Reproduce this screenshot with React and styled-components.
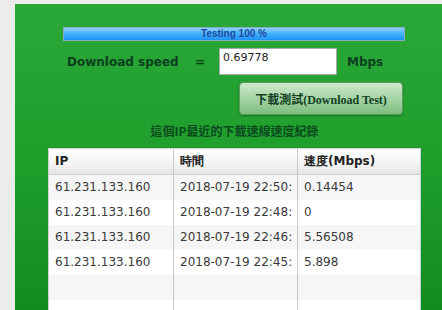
import styled, { createGlobalStyle } from 'styled-components';

const GlobalStyle = createGlobalStyle`
    html, body {
        margin: 0;
        padding: 0;
        background: #ececec;
        font-family: "DejaVu Sans", Verdana, sans-serif;
    }
`;

const Page = styled.div`
    height: 310px;
    padding: 4px 0 0 15px;
    box-sizing: border-box;
    display: flex;
    overflow: hidden;
`;

const Panel = styled.div`
    flex: 1;
    background: linear-gradient(to bottom, #2aa838 0%, #1f9e2c 50%, #118c1d 100%);
    padding: 23px 0 0 33px;
`;

const Column = styled.div`
    width: 373px;
    display: flex;
    flex-direction: column;
`;

const Progress = styled.div`
    margin-left: 15px;
    width: 340px;
    height: 12px;
    border: 1px solid #86a9c4;
    background: linear-gradient(to bottom, #8ed2ff 0%, #45b2ff 45%, #1c93f5 100%);
    color: #1d4a9e;
    font-family: "Liberation Sans", Arial, sans-serif;
    font-weight: bold;
    font-size: 10px;
    line-height: 12px;
    text-align: center;
`;

const SpeedRow = styled.div`
    display: flex;
    align-items: center;
    margin-top: 7px;
    height: 27px;
    color: #0c3f20;
    font-weight: bold;
    font-size: 12px;
`;

const Label = styled.span`
    margin-left: ${p => p.indent || 0}px;
    width: ${p => p.width}px;
`;

const SpeedInput = styled.div`
    width: 113px;
    height: 25px;
    background: #fff;
    border: 1px solid #a9a9a9;
    color: #222;
    font-weight: normal;
    font-size: 11px;
    line-height: 18px;
    padding-left: 3px;
    margin-right: 10px;
`;

const TestButton = styled.button`
    margin: 7px 0 0 191px;
    width: 164px;
    height: 33px;
    border: 1px solid #5e9a62;
    border-radius: 4px;
    background: linear-gradient(to bottom, #cfe9cf 0%, #a9d6a9 45%, #7fbd80 100%);
    box-shadow: 0 1px 2px rgba(0, 0, 0, 0.3);
    color: #12401f;
    font-family: "Liberation Serif", "Noto Sans CJK TC", serif;
    font-weight: bold;
    font-size: 12px;
    padding: 0;
`;

const Caption = styled.div`
    margin-top: 8px;
    text-align: center;
    color: #0b4a1d;
    font-family: "Noto Sans CJK TC", sans-serif;
    font-weight: bold;
    font-size: 12px;
    line-height: 16px;
`;

const Table = styled.div`
    margin-top: 9px;
    background: #fff;
    border: 1px solid #d0d0d0;
`;

const Row = styled.div`
    display: grid;
    grid-template-columns: 124px 124px 1fr;
    height: 25px;
    background: ${p => p.header
        ? 'linear-gradient(to bottom, #ffffff 0%, #f4f4f4 60%, #e4e4e4 100%)'
        : p.shaded ? '#f6f6f6' : '#ffffff'};
    border-bottom: ${p => p.header ? '1px solid #cfcfcf' : 'none'};
`;

const Cell = styled.div`
    border-left: ${p => p.first ? 'none' : '1px solid #c8c8c8'};
    padding-left: 6px;
    font-size: 12px;
    line-height: 25px;
    color: ${p => p.header ? '#222' : '#3a3a3a'};
    font-weight: ${p => p.header ? 'bold' : 'normal'};
    white-space: nowrap;
    overflow: hidden;
`;

const records = [
    ['61.231.133.160', '2018-07-19 22:50:', '0.14454'],
    ['61.231.133.160', '2018-07-19 22:48:', '0'],
    ['61.231.133.160', '2018-07-19 22:46:', '5.56508'],
    ['61.231.133.160', '2018-07-19 22:45:', '5.898'],
    ['', '', ''],
    ['', '', ''],
];

export default () => {
    return (
        <>
            <GlobalStyle />
            <Page>
                <Panel>
                    <Column>
                        <Progress>Testing 100 %</Progress>
                        <SpeedRow>
                            <Label indent={19} width={128}>Download speed</Label>
                            <Label width={24}>=</Label>
                            <SpeedInput>0.69778</SpeedInput>
                            <span>Mbps</span>
                        </SpeedRow>
                        <TestButton>下載測試(Download Test)</TestButton>
                        <Caption>這個IP最近的下載速線速度紀錄</Caption>
                        <Table>
                            <Row header>
                                <Cell first header>IP</Cell>
                                <Cell header>時間</Cell>
                                <Cell header>速度(Mbps)</Cell>
                            </Row>
                            {records.map((r, i) => (
                                <Row key={i} shaded={i % 2 === 0}>
                                    <Cell first>{r[0]}</Cell>
                                    <Cell>{r[1]}</Cell>
                                    <Cell>{r[2]}</Cell>
                                </Row>
                            ))}
                        </Table>
                    </Column>
                </Panel>
            </Page>
        </>
    )
}
